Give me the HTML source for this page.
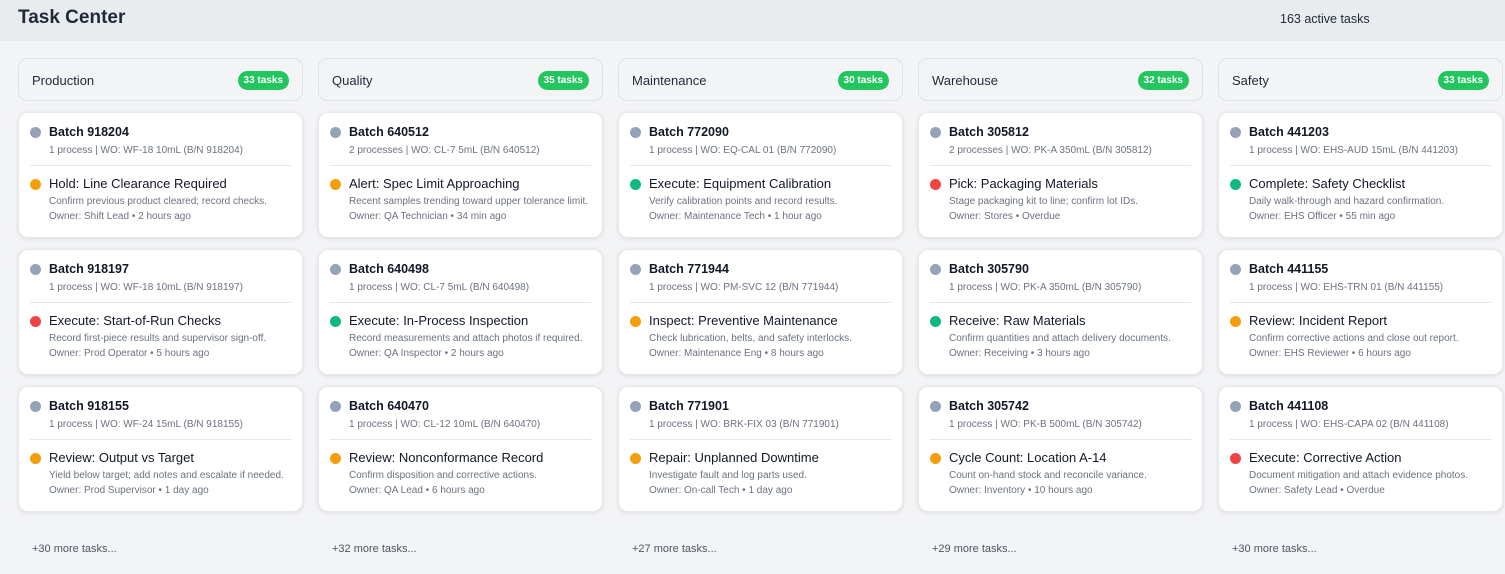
<!DOCTYPE html>
<html><head><meta charset="utf-8"><style>
*{margin:0;padding:0;box-sizing:border-box}
body{width:1505px;height:574px;overflow:hidden;background:#f3f4f6;font-family:"Liberation Sans",sans-serif;color:#111827;position:relative}
.top{position:absolute;left:0;top:0;width:1505px;height:41px;background:#e9ecef}
.top h1{position:absolute;left:18px;top:7px;font-size:19px;font-weight:700;color:#1f2937}
.top .cnt{position:absolute;left:1280px;top:12px;font-size:12.5px;color:#1f2937}
.col{position:absolute;top:58px;width:285px}
.hd{height:43px;border:1px solid #dde1e6;border-radius:9px;background:#f3f4f6;position:relative}
.hd span{position:absolute;left:13px;top:14px;font-size:13px;color:#1f2937}
.hd b{position:absolute;right:13px;top:12px;background:#22c55e;color:#fff;font-size:10px;font-weight:700;border-radius:10px;padding:4px 6px 4px}
.card{position:absolute;left:0;width:285px;height:126px;background:#fff;border:1px solid #e5e7eb;border-radius:10px;box-shadow:0 1px 4px rgba(0,0,0,.1)}
.dot{position:absolute;width:11px;height:11px;border-radius:50%}
.bt{position:absolute;left:30px;top:12px;font-size:12.5px;font-weight:700}
.sub{position:absolute;left:30px;top:32px;font-size:10px;color:#6b7280;white-space:nowrap}
.hr{position:absolute;left:11px;right:11px;top:52px;border-top:1px solid #e5e7eb}
.tt{position:absolute;left:30px;top:63px;font-size:13px;white-space:nowrap}
.ds{position:absolute;left:30px;top:83px;font-size:10px;color:#6b7280;white-space:nowrap}
.ow{position:absolute;left:30px;top:98px;font-size:10px;color:#6b7280;white-space:nowrap}
.more{position:absolute;left:14px;top:485px;font-size:11px;color:#4b5563}
</style></head><body>
<div class="top"><h1>Task Center</h1><div class="cnt">163 active tasks</div></div>
<div id="root"></div>
<script>
const g='#94a3b8',o='#f59e0b',gr='#10b981',r='#ef4444';
const cols=[
["Production","33 tasks","+30 more tasks...",[
["Batch 918204","1 process | WO: WF-18 10mL (B/N 918204)",o,"Hold: Line Clearance Required","Confirm previous product cleared; record checks.","Owner: Shift Lead • 2 hours ago"],
["Batch 918197","1 process | WO: WF-18 10mL (B/N 918197)",r,"Execute: Start-of-Run Checks","Record first-piece results and supervisor sign-off.","Owner: Prod Operator • 5 hours ago"],
["Batch 918155","1 process | WO: WF-24 15mL (B/N 918155)",o,"Review: Output vs Target","Yield below target; add notes and escalate if needed.","Owner: Prod Supervisor • 1 day ago"]]],
["Quality","35 tasks","+32 more tasks...",[
["Batch 640512","2 processes | WO: CL-7 5mL (B/N 640512)",o,"Alert: Spec Limit Approaching","Recent samples trending toward upper tolerance limit.","Owner: QA Technician • 34 min ago"],
["Batch 640498","1 process | WO: CL-7 5mL (B/N 640498)",gr,"Execute: In-Process Inspection","Record measurements and attach photos if required.","Owner: QA Inspector • 2 hours ago"],
["Batch 640470","1 process | WO: CL-12 10mL (B/N 640470)",o,"Review: Nonconformance Record","Confirm disposition and corrective actions.","Owner: QA Lead • 6 hours ago"]]],
["Maintenance","30 tasks","+27 more tasks...",[
["Batch 772090","1 process | WO: EQ-CAL 01 (B/N 772090)",gr,"Execute: Equipment Calibration","Verify calibration points and record results.","Owner: Maintenance Tech • 1 hour ago"],
["Batch 771944","1 process | WO: PM-SVC 12 (B/N 771944)",o,"Inspect: Preventive Maintenance","Check lubrication, belts, and safety interlocks.","Owner: Maintenance Eng • 8 hours ago"],
["Batch 771901","1 process | WO: BRK-FIX 03 (B/N 771901)",o,"Repair: Unplanned Downtime","Investigate fault and log parts used.","Owner: On-call Tech • 1 day ago"]]],
["Warehouse","32 tasks","+29 more tasks...",[
["Batch 305812","2 processes | WO: PK-A 350mL (B/N 305812)",r,"Pick: Packaging Materials","Stage packaging kit to line; confirm lot IDs.","Owner: Stores • Overdue"],
["Batch 305790","1 process | WO: PK-A 350mL (B/N 305790)",gr,"Receive: Raw Materials","Confirm quantities and attach delivery documents.","Owner: Receiving • 3 hours ago"],
["Batch 305742","1 process | WO: PK-B 500mL (B/N 305742)",o,"Cycle Count: Location A-14","Count on-hand stock and reconcile variance.","Owner: Inventory • 10 hours ago"]]],
["Safety","33 tasks","+30 more tasks...",[
["Batch 441203","1 process | WO: EHS-AUD 15mL (B/N 441203)",gr,"Complete: Safety Checklist","Daily walk-through and hazard confirmation.","Owner: EHS Officer • 55 min ago"],
["Batch 441155","1 process | WO: EHS-TRN 01 (B/N 441155)",o,"Review: Incident Report","Confirm corrective actions and close out report.","Owner: EHS Reviewer • 6 hours ago"],
["Batch 441108","1 process | WO: EHS-CAPA 02 (B/N 441108)",r,"Execute: Corrective Action","Document mitigation and attach evidence photos.","Owner: Safety Lead • Overdue"]]]];
let h='';
cols.forEach((c,i)=>{
h+=`<div class="col" style="left:${18+i*300}px"><div class="hd"><span>${c[0]}</span><b>${c[1]}</b></div>`;
c[3].forEach((k,j)=>{
h+=`<div class="card" style="top:${54+j*137}px"><div class="dot" style="left:11px;top:14px;background:${g}"></div><div class="bt">${k[0]}</div><div class="sub">${k[1]}</div><div class="hr"></div><div class="dot" style="left:11px;top:66px;background:${k[2]}"></div><div class="tt">${k[3]}</div><div class="ds">${k[4]}</div><div class="ow">${k[5]}</div></div>`;});
h+=`<div class="more">${c[2]}</div></div>`;});
document.getElementById('root').innerHTML=h;
</script>
</body></html>
